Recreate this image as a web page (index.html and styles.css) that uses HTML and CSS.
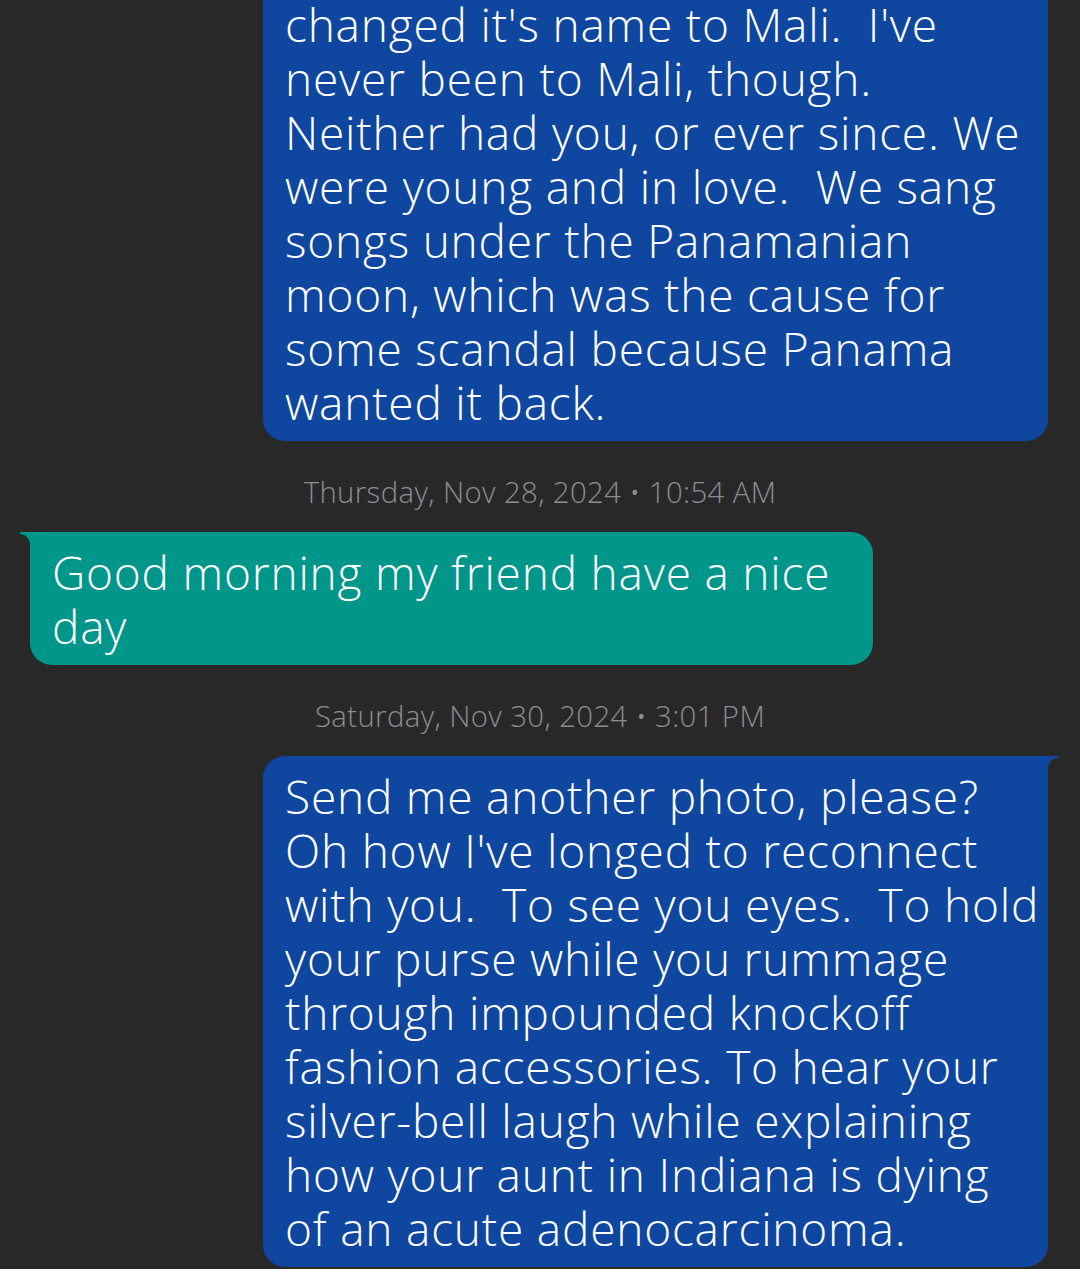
FILE: index.html
```html
<!DOCTYPE html>
<html lang="en">
<head>
<meta charset="utf-8">
<title>Messages</title>
<link rel="stylesheet" href="styles.css">
</head>
<body>
<main class="thread">
  <div class="bubble out first">
    <p class="msg">changed it's name to Mali.&nbsp; I've<br>never been to Mali, though.<br>Neither had you, or ever since. We<br>were young and in love.&nbsp; We sang<br>songs under the Panamanian<br>moon, which was the cause for<br>some scandal because Panama<br>wanted it back.</p>
  </div>
  <div class="stamp">Thursday, Nov 28, 2024 • 10:54 AM</div>
  <div class="bubble in tail">
    <p class="msg">Good morning my friend have a nice<br>day</p>
  </div>
  <div class="stamp">Saturday, Nov 30, 2024 • 3:01 PM</div>
  <div class="bubble out tail">
    <p class="msg">Send me another photo, please?<br>Oh how I've longed to reconnect<br>with you.&nbsp; To see you eyes.&nbsp; To hold<br>your purse while you rummage<br>through impounded knockoff<br>fashion accessories. To hear your<br>silver-bell laugh while explaining<br>how your aunt in Indiana is dying<br>of an acute adenocarcinoma.</p>
  </div>
</main>
</body>
</html>
```

FILE: styles.css
```css
html, body {
  margin: 0;
  padding: 0;
  background: #282828;
}
body {
  width: 1080px;
  height: 1269px;
  overflow: hidden;
  font-family: "Open Sans", "Liberation Sans", sans-serif;
}
.thread {
  display: flex;
  flex-direction: column;
}
.bubble {
  position: relative;
  box-sizing: border-box;
  padding: 13px 20px 12px 22px;
  border-radius: 22px;
  color: #fff;
}
.bubble.out {
  align-self: flex-end;
  width: 785px;
  margin-right: 32px;
  background: #0f47a0;
}
.bubble.in {
  align-self: flex-start;
  width: 843px;
  margin-left: 30px;
  background: #00968a;
}
.bubble.first {
  margin-top: -16px;
  border-top-right-radius: 0;
  border-top-left-radius: 0;
}
.bubble.out.tail { border-top-right-radius: 0; }
.bubble.in.tail { border-top-left-radius: 0; }
.bubble.out.tail::after {
  content: "";
  position: absolute;
  top: 0;
  right: -10px;
  width: 10px;
  height: 12px;
  background: radial-gradient(circle at 100% 100%, transparent 9.5px, #0f47a0 10px);
}
.bubble.in.tail::after {
  content: "";
  position: absolute;
  top: 0;
  left: -10px;
  width: 10px;
  height: 12px;
  background: radial-gradient(circle at 0% 100%, transparent 9.5px, #00968a 10px);
}
.msg {
  margin: 0;
  font-size: 46px;
  font-weight: 350;
  letter-spacing: 0.8px;
  line-height: 54px;
  white-space: nowrap;
}
.stamp {
  align-self: center;
  color: #8b8e94;
  font-size: 29.3px;
  font-weight: 300;
  letter-spacing: 0.4px;
  line-height: 36px;
  margin: 33px 0 22px;
}
```
